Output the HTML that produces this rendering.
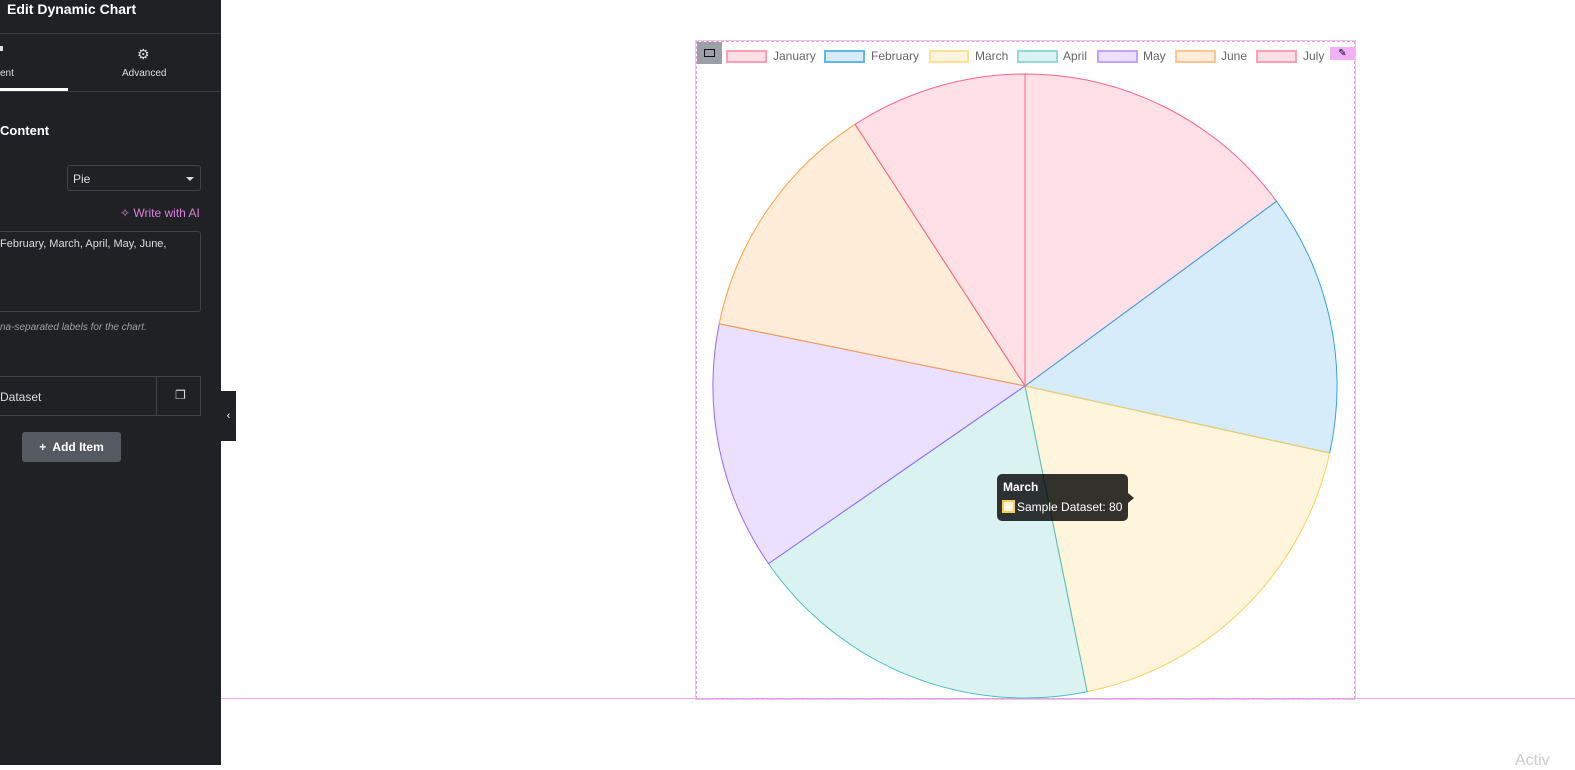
<!DOCTYPE html>
<html><head><meta charset="utf-8"><style>
*{margin:0;padding:0;box-sizing:border-box}
body{width:1575px;height:765px;overflow:hidden;background:#fff;font-family:"Liberation Sans",sans-serif;position:relative}
.panel{position:absolute;left:0;top:0;width:221px;height:765px;background:#1f2124;color:#fff}
.a{position:absolute}
.leg{position:absolute;top:50px;height:13px;border:2px solid;}
.lt{position:absolute;top:49px;font-size:12px;color:#666}
</style></head><body>
<div class="panel">
 <div class="a" style="left:7px;top:1px;font-size:14px;font-weight:bold">Edit Dynamic Chart</div>
 <div class="a" style="left:0;top:33px;width:221px;height:1px;background:#3a3d42"></div>
 <div class="a" style="left:0;top:46px;width:3px;height:5px;background:#ddd"></div>
 <div class="a" style="left:0;top:68px;font-size:10px;color:#ddd">ent</div>
 <div class="a" style="left:137px;top:46px;font-size:14px;color:#ddd">⚙</div>
 <div class="a" style="left:122px;top:68px;font-size:10px;color:#ddd">Advanced</div>
 <div class="a" style="left:0;top:88px;width:68px;height:3px;background:#fff"></div>
 <div class="a" style="left:0;top:91px;width:221px;height:1px;background:#3a3d42"></div>
 <div class="a" style="left:0;top:123px;font-size:13px;font-weight:bold">Content</div>
 <div class="a" style="left:67px;top:165px;width:134px;height:26px;border:1px solid #3f4247;border-radius:3px;font-size:12px;padding:6px 5px;color:#ddd">Pie<span style="position:absolute;right:6px;top:11px;border:4px solid transparent;border-top:4px solid #ddd"></span></div>
 <div class="a" style="left:120px;top:206px;font-size:12px;color:#e07ee0">✧ Write with AI</div>
 <div class="a" style="left:-5px;top:231px;width:206px;height:81px;border:1px solid #3f4247;border-radius:3px;font-size:11px;padding:6px 4px;color:#ddd">February, March, April, May, June,</div>
 <div class="a" style="left:0;top:322px;font-size:10px;font-style:italic;color:#9da0a6">na-separated labels for the chart.</div>
 <div class="a" style="left:-5px;top:376px;width:206px;height:40px;border:1px solid #3f4247;font-size:12px;padding:13px 4px;color:#ddd">Dataset<div class="a" style="left:160px;top:-1px;width:1px;height:40px;background:#3f4247"></div><span class="a" style="left:179px;top:11px;font-size:12px">❐</span></div>
 <div class="a" style="left:22px;top:432px;width:99px;height:30px;background:#555a62;border-radius:3px;font-size:12px;font-weight:bold;text-align:center;line-height:30px">+&nbsp; Add Item</div>
</div>
<div class="a" style="left:221px;top:391px;width:15px;height:50px;background:#1f2124;color:#fff;font-size:11px;line-height:50px;text-align:center">‹</div>
<div class="a" style="left:221px;top:698px;width:1354px;height:1px;background:#f0a6f0"></div>
<div class="a" style="left:696px;top:41px;width:659px;height:658px;border:1px dashed #d9a0d9;outline:1px solid #f0c0f0"></div>
<div class="a" style="left:697px;top:42px;width:25px;height:22px;background:#9ba0a6"><div class="a" style="left:7px;top:7px;width:11px;height:8px;border:1.5px solid #111"></div></div>
<div class="a" style="left:1330px;top:47px;width:25px;height:13px;background:#f0b0f5;font-size:10px;text-align:center;line-height:13px">✎</div>
<div class="leg" style="left:726px;width:41px;border-color:#ff9fb4;background:#ffe0e6"></div><div class="lt" style="left:773px">January</div>
<div class="leg" style="left:824px;width:41px;border-color:#62b5ee;background:#d7ecfb"></div><div class="lt" style="left:871px">February</div>
<div class="leg" style="left:929px;width:40px;border-color:#ffe09a;background:#fff5dd"></div><div class="lt" style="left:975px">March</div>
<div class="leg" style="left:1017px;width:41px;border-color:#92d8d8;background:#dbf2f2"></div><div class="lt" style="left:1063px">April</div>
<div class="leg" style="left:1097px;width:41px;border-color:#c2a3ff;background:#ebe0ff"></div><div class="lt" style="left:1143px">May</div>
<div class="leg" style="left:1175px;width:41px;border-color:#ffc48f;background:#ffecd9"></div><div class="lt" style="left:1221px">June</div>
<div class="leg" style="left:1256px;width:41px;border-color:#ff9fb4;background:#ffe0e6"></div><div class="lt" style="left:1303px">July</div>
<svg class="a" style="left:0;top:0" width="1575" height="765">
<g stroke-width="1">
<path d="M1025 386L1025 74A312 312 0 0 1 1276.5 201.3Z" fill="rgba(255,99,132,0.2)" stroke="#ff6384"/>
<path d="M1025 386L1276.5 201.3A312 312 0 0 1 1329.7 453Z" fill="rgba(54,162,235,0.2)" stroke="#36a2eb"/>
<path d="M1025 386L1329.7 453A312 312 0 0 1 1087.2 691.7Z" fill="rgba(255,205,86,0.2)" stroke="#ffcd56"/>
<path d="M1025 386L1087.2 691.7A312 312 0 0 1 768.5 563.6Z" fill="rgba(75,192,192,0.2)" stroke="#4bc0c0"/>
<path d="M1025 386L768.5 563.6A312 312 0 0 1 719.2 323.8Z" fill="rgba(153,102,255,0.2)" stroke="#9966ff"/>
<path d="M1025 386L719.2 323.8A312 312 0 0 1 855.1 124.3Z" fill="rgba(255,159,64,0.2)" stroke="#ff9f40"/>
<path d="M1025 386L855.1 124.3A312 312 0 0 1 1025 74Z" fill="rgba(255,99,132,0.2)" stroke="#ff6384"/>
</g>
<path d="M1128 493L1134 498L1128 503Z" fill="rgba(0,0,0,0.8)"/>
</svg>
<div class="a" style="left:997px;top:474px;width:131px;height:47px;background:rgba(0,0,0,0.8);border-radius:5px;color:#fff;font-size:12px">
 <div class="a" style="left:6px;top:6px;font-weight:bold">March</div>
 <div class="a" style="left:5px;top:26px;width:13px;height:13px;background:#fff5dd;border:2px solid #ffcd56"></div>
 <div class="a" style="left:20px;top:26px">Sample Dataset: 80</div>
</div>
<div class="a" style="left:1515px;top:752px;font-size:16px;color:#ccc">Activ</div>
</body></html>
